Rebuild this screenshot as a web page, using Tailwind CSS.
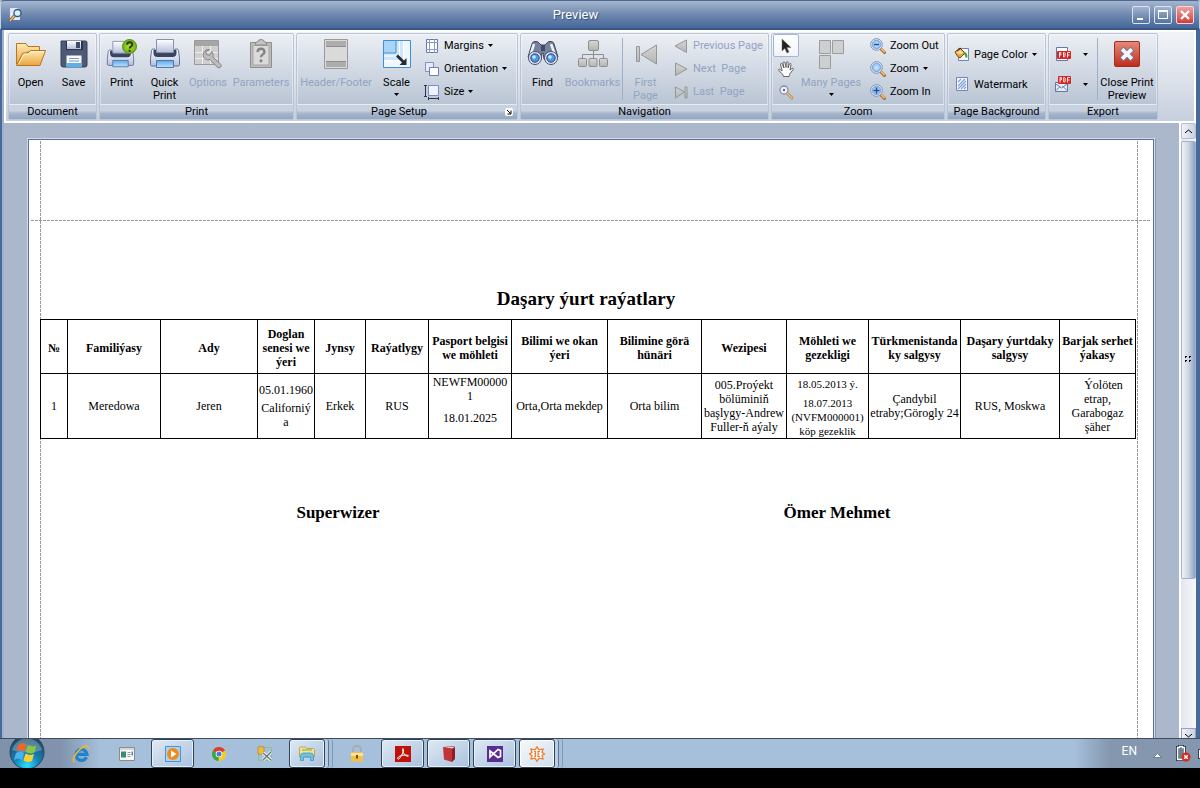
<!DOCTYPE html>
<html lang="tk">
<head>
<meta charset="utf-8">
<title>Preview</title>
<script src="https://cdn.jsdelivr.net/npm/@tailwindcss/browser@4"></script>
</head>
<body class="h-screen overflow-hidden bg-black flex flex-col font-[Roboto,sans-serif] text-[11px] leading-[13px] text-black">

<svg class="absolute w-0 h-0" aria-hidden="true">
  <defs>
    <linearGradient id="folder" x1="0" y1="0" x2="0" y2="1"><stop offset="0" stop-color="#fdeab5"/><stop offset="1" stop-color="#eaa43c"/></linearGradient>
    <linearGradient id="metal" x1="0" y1="0" x2="0" y2="1"><stop offset="0" stop-color="#ffffff"/><stop offset="1" stop-color="#b4bfdc"/></linearGradient>
    <linearGradient id="sky" x1="0" y1="0" x2="0" y2="1"><stop offset="0" stop-color="#5aa9ea"/><stop offset="1" stop-color="#bfe4fd"/></linearGradient>
    <linearGradient id="ash" x1="0" y1="0" x2="0" y2="1"><stop offset="0" stop-color="#d6d6d6"/><stop offset="1" stop-color="#b4b4b4"/></linearGradient>
    <linearGradient id="red" x1="0" y1="0" x2="0" y2="1"><stop offset="0" stop-color="#e88b79"/><stop offset="1" stop-color="#bf2a1b"/></linearGradient>
    <radialGradient id="green"><stop offset="0" stop-color="#b7e236"/><stop offset="1" stop-color="#6fae16"/></radialGradient>
    <radialGradient id="lens"><stop offset="0" stop-color="#d4eafd"/><stop offset="1" stop-color="#86b9ee"/></radialGradient>
    <radialGradient id="orb" cx=".5" cy=".9" r=".8"><stop offset="0" stop-color="#2fe0ff"/><stop offset=".45" stop-color="#1583b8"/><stop offset="1" stop-color="#234a66"/></radialGradient>
    <symbol id="printer" viewBox="0 0 32 32">
      <path d="M5 12h22l1 8H4z" fill="#3d4a66"/>
      <path d="M2.500 12.500q0-1.500 2-1.500H6v4q0 2 2 2h16q2 0 2-2v-4h1.500q2 0 2 1.500l1 8v6q0 1.500-1.500 1.500H3q-1.500 0-1.500-1.500v-6z" fill="url(#metal)" stroke="#62709a"/>
      <path d="M6 12v3q0 2.500 2.500 2.500h15Q26 17.500 26 15v-3" fill="none" stroke="#38445f" stroke-width="3"/>
      <path d="M7.500 1.500h17v13h-17z" fill="url(#metal)" stroke="#8792ac"/>
      <path d="M7.500 22.500h17v7h-17z" fill="url(#sky)" stroke="#5674a8"/>
    </symbol>
    <symbol id="magnifier" viewBox="0 0 16 16">
      <path d="M11 11l3.500 3.500" stroke="#b06a1f" stroke-width="3" stroke-linecap="round"/>
      <path d="M11.300 10.800l3 3" stroke="#f3c276" stroke-width="1.500" stroke-linecap="round"/>
      <circle cx="6.500" cy="6.500" r="5.800" fill="#f4f8fe" stroke="#7a8cba"/>
      <circle cx="6.500" cy="6.500" r="4.300" fill="url(#lens)" stroke="#6f93d0" stroke-width=".8"/>
    </symbol>
    <symbol id="caret" viewBox="0 0 5 3"><path d="M0 0h5L2.500 3z"/></symbol>
  </defs>
</svg>

<main class="flex-1 min-h-0 flex flex-col overflow-hidden bg-[#abb8cb]">
  <header class="h-[30px] shrink-0 flex items-center pl-2 pr-[5px] gap-[2px] rounded-t-[4px] border border-b-2 border-[#c3d0e2] border-t-[#4a6890] border-b-[#3a5884] bg-linear-to-b from-[#a5b6d0] via-[#7089af] to-[#45679a]">
    <svg class="w-[14px] h-4 shrink-0" viewBox="0 0 14 16"><path d="M1 1h8l2 2v10H1z" fill="#dfe9fa"/><path d="M6 8l-5 6" stroke="#8a5a2a" stroke-width="3"/><path d="M6 8l-5 6" stroke="#f4c88c" stroke-width="1.200"/><circle cx="8.500" cy="6" r="3.500" fill="#d7f2f8" stroke="#34567d" stroke-width="1.300"/></svg>
    <h1 class="flex-1 text-center text-[13px] leading-4 pr-1 text-white [text-shadow:1px_1px_1px_#334f78]">Preview</h1>
    <div class="flex gap-1">
      <button aria-label="Minimize" class="w-[18px] h-[18px] rounded-[2px] border border-[#dbe4f0] bg-linear-to-b from-[#a2b4d0] to-[#5573a2] flex items-end justify-start pl-1 pb-[3px]"><span class="w-[6px] h-[2px] bg-white"></span></button>
      <button aria-label="Maximize" class="w-[18px] h-[18px] rounded-[2px] border border-[#dbe4f0] bg-linear-to-b from-[#a2b4d0] to-[#5573a2] flex items-center justify-center"><span class="w-[10px] h-[9px] border border-t-2 border-white"></span></button>
      <button aria-label="Close" class="w-[18px] h-[18px] rounded-[2px] border border-[#f4d8d8] bg-linear-to-b from-[#eca0a0] to-[#d03a3a] flex items-center justify-center"><svg class="w-[10px] h-[10px]" viewBox="0 0 10 10"><path d="M1 1l8 8M9 1L1 9" stroke="#fff" stroke-width="2.400"/></svg></button>
    </div>
  </header>

  <div class="flex-1 min-h-0 flex flex-col border-l-2 border-r-4 border-l-[#4a6a9c] border-r-[#49699a] pl-[2px] shadow-[inset_2px_0_0_#9db0cc]">
    <nav aria-label="Ribbon" class="h-[93px] shrink-0 flex gap-[2px] pl-[2px] pt-[1px] border-2 border-white bg-linear-to-b from-[#f1f3f7] via-[#dfe4ec] to-[#c6cfde] overflow-hidden">

      <section class="w-[89px] shrink-0 h-[87px] flex flex-col border border-[#b9c5d7] rounded-[2px] bg-linear-to-b from-[#eceff4] to-[#afbccd] shadow-[inset_0_0_0_1px_#ffffff66]">
        <div class="h-[70px] flex">
          <button class="w-[43px] pt-1 flex flex-col items-center gap-[6px]">
            <svg class="w-8 h-8" viewBox="0 0 32 32"><path d="M1.500 26V5.500h9.500l2 3h11.500V14h-12l-7 12z" fill="url(#folder)" stroke="#b77722"/><path d="M1.500 27.500L8 15h5l2.500-2.500h15L25 27.500z" fill="url(#folder)" stroke="#b9731c"/><path d="M3.500 26.300L9 16.200h4.500l2.500-2.500h13" fill="none" stroke="#fff3cd"/></svg>
            <span>Open</span></button>
          <button class="w-[43px] pt-1 flex flex-col items-center gap-[6px]">
            <svg class="w-8 h-8" viewBox="0 0 32 32"><path d="M3 3h24.500q1.500 0 1.500 1.500V27q0 2-2 2H5q-2 0-2-2z" fill="#4e5a75" stroke="#37425c"/><path d="M8 3h17v9H8z" fill="#2b3450"/><path d="M9 3h14v8H9z" fill="url(#metal)"/><path d="M18 4h4v6h-4z" fill="#3f4a66"/><path d="M8.500 17.500h15v11h-15z" fill="#f7f9fd"/><path d="M8.500 25h15v4h-15z" fill="#5bb1ea"/><path d="M11 20.500h10M11 23h10" stroke="#8a97b4"/></svg>
            <span>Save</span></button>
        </div>
        <h2 class="flex-1 leading-[14px] text-center border-t border-[#e6ebf3] bg-linear-to-b from-[#c7d1e0] from-40% via-[#a7b5cc] via-60% to-[#94a6c2]">Document</h2>
      </section>

      <section class="w-[195px] shrink-0 h-[87px] flex flex-col border border-[#b9c5d7] rounded-[2px] bg-linear-to-b from-[#eceff4] to-[#afbccd] shadow-[inset_0_0_0_1px_#ffffff66]">
        <div class="h-[70px] flex">
          <button class="w-[43px] pt-1 flex flex-col items-center gap-[6px]">
            <svg class="w-8 h-8" viewBox="0 0 32 32"><svg x="0" y="2" width="29" height="29" viewBox="0 0 32 32"><use href="#printer"/></svg><circle cx="23.500" cy="8.500" r="7" fill="url(#green)" stroke="#5a8f14"/><path d="M21 6.700q.2-2.500 2.700-2.500T26.300 6.500q0 1.500-1.500 2.200-1.200.6-1.200 1.800" fill="none" stroke="#243b08" stroke-width="1.900"/><path d="M22.600 11.800h2v2h-2z" fill="#243b08"/></svg>
            <span>Print</span></button>
          <button class="w-[43px] pt-1 flex flex-col items-center gap-[6px]">
            <svg class="w-8 h-8"><use href="#printer"/></svg>
            <span>Quick<br>Print</span></button>
          <button disabled class="w-[44px] pt-1 flex flex-col items-center gap-[6px] text-[#91a4c3]">
            <svg class="w-8 h-8" viewBox="0 0 32 32"><path d="M2.500 2.500h24v24h-24z" fill="#cfcfcf" stroke="#999"/><path d="M3 3h23v5H3z" fill="#a5a5a5"/><path d="M3 14.500h23M3 20.500h23M10.500 8v18M18.500 8v18" stroke="#eee"/><path d="M17.500 11.500a5.500 5.500 0 0 0-6 7.500 5.500 5.500 0 0 0 6.500 2.500l7.500 7.800q1.600 1.300 3-.1t.1-3l-7.800-7.200a5.500 5.500 0 0 0-1-5.500l-2.300 3.800-3-.8-.6-3z" fill="#bdbdbd" stroke="#858585"/></svg>
            <span>Options</span></button>
          <button disabled class="w-[62px] pt-1 flex flex-col items-center gap-[6px] text-[#91a4c3]">
            <svg class="w-8 h-8" viewBox="0 0 32 32"><path d="M5.500 4.500h21v25h-21z" fill="#bcbcbc" stroke="#8e8e8e"/><path d="M8 7.500h16v19.500H8z" fill="#dadada" stroke="#a5a5a5"/><path d="M10.500 7V5q0-1 2-1 .5-2.500 3.500-2.500T19.500 4q2 0 2 1v2z" fill="#c4c4c4" stroke="#8b8b8b"/><path d="M12.500 14q.3-3.200 3.500-3.200t3.500 3q0 2-2 2.900-1.500.8-1.500 2.600" fill="none" stroke="#848484" stroke-width="2.400"/><circle cx="16" cy="22.800" r="1.600" fill="#848484"/></svg>
            <span>Parameters</span></button>
        </div>
        <h2 class="flex-1 leading-[14px] text-center border-t border-[#e6ebf3] bg-linear-to-b from-[#c7d1e0] from-40% via-[#a7b5cc] via-60% to-[#94a6c2]">Print</h2>
      </section>

      <section class="w-[222px] shrink-0 h-[87px] flex flex-col border border-[#b9c5d7] rounded-[2px] bg-linear-to-b from-[#eceff4] to-[#afbccd] shadow-[inset_0_0_0_1px_#ffffff66]">
        <div class="h-[70px] flex">
          <button disabled class="w-[78px] pt-1 flex flex-col items-center gap-[6px] text-[#91a4c3]">
            <svg class="w-8 h-8" viewBox="0 0 32 32"><path d="M4.500 1.500h23v29h-23z" fill="#dadada" stroke="#9a9a9a"/><path d="M6 3h20v5H6zM6 24h20v5H6z" fill="#adadad"/><path d="M6 8.500h20M6 23.500h20" stroke="#8f8f8f"/></svg>
            <span>Header/Footer</span></button>
          <button class="w-[43px] pt-1 flex flex-col items-center gap-[6px]">
            <svg class="w-8 h-8" viewBox="0 0 32 32"><path d="M2.500 2.500h27v27h-27z" fill="#eef7fe" stroke="#3f8fd4"/><path d="M3 3h19v19H3z" fill="#cde6fa"/><path d="M22.500 3v20H3M18.500 3v15H3" fill="none" stroke="#fff"/><path d="M3 3h12v12H3z" fill="#a8d4f8"/><path d="M15 3v12H3" fill="none" stroke="#3f8fd4"/><path d="M17 16.500l6 6 2.500-2.500v7h-7l2.500-2.500-6-6z" fill="#262b36"/></svg>
            <span class="flex flex-col items-center gap-1">Scale<svg class="w-[5px] h-[3px]"><use href="#caret"/></svg></span></button>
          <div class="flex flex-col pl-[6px] flex-1">
            <button class="h-[23px] flex items-center gap-1"><svg class="w-4 h-4" viewBox="0 0 16 16"><path d="M2.500 1.500h11v13h-11z" fill="#fff" stroke="#6676b0"/><path d="M5.500 1v14M10.500 1v14M2 4.500h12M2 11.500h12" stroke="#8b98c8"/></svg>Margins<svg class="w-[5px] h-[3px]"><use href="#caret"/></svg></button>
            <button class="h-[23px] flex items-center gap-1"><svg class="w-4 h-4" viewBox="0 0 16 16"><path d="M1.500 1.500h8v9h-8z" fill="#e7ecfa" stroke="#8290c4"/><path d="M5.500 6.500h9v8h-9z" fill="#fff" stroke="#6f7eb6"/></svg>Orientation<svg class="w-[5px] h-[3px]"><use href="#caret"/></svg></button>
            <button class="h-[23px] flex items-center gap-1"><svg class="w-4 h-4" viewBox="0 0 16 16"><path d="M4.500 1.500h10v10h-10z" fill="#eef2fd" stroke="#7d8bc0"/><path d="M1.500 1v11M0 1.500h3M0 12.500h3M4.500 14.500h10M4.500 13v3M14.500 13v3" stroke="#28355f"/></svg>Size<svg class="w-[5px] h-[3px]"><use href="#caret"/></svg></button>
          </div>
        </div>
        <div class="flex-1 flex items-start border-t border-[#e6ebf3] bg-linear-to-b from-[#c7d1e0] from-40% via-[#a7b5cc] via-60% to-[#94a6c2] px-1">
          <h2 class="flex-1 text-center leading-[14px] pr-2">Page Setup</h2>
          <button aria-label="Page Setup options" class="w-2 h-2 mt-[3px] rounded-[2px] bg-white"><svg class="w-2 h-2" viewBox="0 0 8 8"><path d="M2 2l3.500 3.500M6 2.500V6H2.500" fill="none" stroke="#000"/></svg></button>
        </div>
      </section>

      <section class="w-[249px] shrink-0 h-[87px] flex flex-col border border-[#b9c5d7] rounded-[2px] bg-linear-to-b from-[#eceff4] to-[#afbccd] shadow-[inset_0_0_0_1px_#ffffff66]">
        <div class="h-[70px] flex">
          <button class="w-[43px] pt-1 flex flex-col items-center gap-[6px]">
            <svg class="w-8 h-8" viewBox="0 0 32 32"><path d="M5 6q0-2 3-2.500t4 1.500l2 2h4l2-2q1-2 4-1.500t3 2.500l4 13-8 6-6-4-1-6h-1l-1 6-6 4-7-6z" fill="#77819e" stroke="#3c455f"/><path d="M7 6l-3.500 11M24 6l4 11" stroke="#eef1f8" stroke-width="2.500"/><path d="M14 7h4v6h-4z" fill="#414b66"/><circle cx="8" cy="20" r="6.500" fill="#e4e8f1" stroke="#454f6c"/><circle cx="24" cy="20" r="6.500" fill="#e4e8f1" stroke="#454f6c"/><circle cx="8" cy="20" r="4.200" fill="#4b9bea" stroke="#2c3c80"/><circle cx="24" cy="20" r="4.200" fill="#4b9bea" stroke="#2c3c80"/><circle cx="7" cy="19" r="1.800" fill="#c9e9ff"/><circle cx="23" cy="19" r="1.800" fill="#c9e9ff"/></svg>
            <span>Find</span></button>
          <button disabled class="w-[57px] pt-1 flex flex-col items-center gap-[6px] text-[#91a4c3]">
            <svg class="w-8 h-8" viewBox="0 0 32 32"><g fill="url(#ash)" stroke="#8e8e8e"><rect x="11.500" y="2.500" width="10" height="10" rx="1.500"/><rect x="1.500" y="20.500" width="8" height="8" rx="1"/><rect x="12" y="20.500" width="8" height="8" rx="1"/><rect x="22.500" y="20.500" width="8" height="8" rx="1"/></g><path d="M16.500 13v7M5.500 20v-3.500h21V20" fill="none" stroke="#8e8e8e"/></svg>
            <span>Bookmarks</span></button>
          <span class="w-px h-[62px] mt-1 mx-[1px] bg-[#9fb0cb]"></span>
          <button disabled class="w-[43px] pt-1 flex flex-col items-center gap-[6px] text-[#91a4c3]">
            <svg class="w-8 h-8" viewBox="0 0 32 32"><path d="M6.500 8.500h3v15h-3zM26.500 7v19L11 16.500z" fill="url(#ash)" stroke="#969696"/></svg>
            <span>First<br>Page</span></button>
          <div class="flex flex-col pl-[6px] flex-1 text-[#91a4c3] whitespace-nowrap">
            <button disabled class="h-[23px] flex items-center gap-1"><svg class="w-4 h-4 shrink-0" viewBox="0 0 16 16"><path d="M13.500 2v12.500L2 8z" fill="url(#ash)" stroke="#969696"/></svg>Previous Page</button>
            <button disabled class="h-[23px] flex items-center gap-1"><svg class="w-4 h-4 shrink-0" viewBox="0 0 16 16"><path d="M2.500 2v12.500L14 8z" fill="url(#ash)" stroke="#969696"/></svg>Next&nbsp; Page</button>
            <button disabled class="h-[23px] flex items-center gap-1"><svg class="w-4 h-4 shrink-0" viewBox="0 0 16 16"><path d="M2.500 3v11L11.500 8zM12 3h2v11h-2z" fill="url(#ash)" stroke="#969696"/></svg>Last&nbsp; Page</button>
          </div>
        </div>
        <h2 class="flex-1 leading-[14px] text-center border-t border-[#e6ebf3] bg-linear-to-b from-[#c7d1e0] from-40% via-[#a7b5cc] via-60% to-[#94a6c2]">Navigation</h2>
      </section>

      <section class="w-[174px] shrink-0 h-[87px] flex flex-col border border-[#b9c5d7] rounded-[2px] bg-linear-to-b from-[#eceff4] to-[#afbccd] shadow-[inset_0_0_0_1px_#ffffff66]">
        <div class="h-[70px] flex pl-[1px]">
          <div class="w-[26px] flex flex-col">
            <button aria-label="Pointer" class="h-[23px] flex items-center justify-center bg-linear-to-b from-white to-[#f1f4f9] border border-[#a3b5d2] rounded-[2px]"><svg class="w-4 h-4" viewBox="0 0 16 16"><path d="M4 1v12l2.800-2.600L9 15l2-1-2.200-4.400H13z" fill="#222" stroke="#777" stroke-width=".5"/></svg></button>
            <button aria-label="Hand Tool" class="h-[23px] flex items-center justify-center"><svg class="w-4 h-4" viewBox="0 0 16 16"><path d="M4 9L2.500 3.500q0-1 .8-1t1 .8L6 7 5 2q0-1 .9-1t1.100 1l1 4.500L8.300 1.500q.2-.9 1-.8t.8 1V7l1.300-4q.4-.8 1.100-.6t.5 1.300L12 9l2-1.500q1-.5 1.300.1t-.5 1.400L12 12.500q-.5 1-1 3H5.500Q5 13 3 11.500L.7 9.500Q.2 8.500 1 8.200t1.400.4L4 10z" fill="#fff" stroke="#444" stroke-width=".8"/></svg></button>
            <button aria-label="Magnifier" class="h-[23px] flex items-center justify-center"><svg class="w-4 h-4" viewBox="0 0 16 16"><path d="M9 9l5 5" stroke="#b5762d" stroke-width="2.600" stroke-linecap="round"/><path d="M9 9l5 5" stroke="#f6cd8b" stroke-width="1.200" stroke-linecap="round"/><circle cx="6" cy="6" r="4" fill="#e4f1fd" stroke="#8093b5" stroke-width="1.300"/><path d="M5 5h2v2H5z" fill="#e0321f"/></svg></button>
          </div>
          <button disabled class="w-[64px] pt-1 flex flex-col items-center gap-[6px] text-[#91a4c3] whitespace-nowrap">
            <svg class="w-8 h-8" viewBox="0 0 32 32"><path d="M4.500 2.500h11v13h-11zM17.500 2.500h11v13h-11zM4.500 17.500h11v13h-11z" fill="#cdcfd1" stroke="#9c9c9c"/></svg>
            <span class="flex flex-col items-center gap-1">Many Pages<svg class="w-[5px] h-[3px] text-black"><use href="#caret"/></svg></span></button>
          <div class="flex flex-col pl-[7px] flex-1 whitespace-nowrap">
            <button class="h-[23px] flex items-center gap-1"><svg class="w-4 h-4 shrink-0" viewBox="0 0 16 16"><use href="#magnifier"/><path d="M4 6.500h5" stroke="#234d92" stroke-width="1.500"/></svg>Zoom Out</button>
            <button class="h-[23px] flex items-center gap-1"><svg class="w-4 h-4 shrink-0"><use href="#magnifier"/></svg>Zoom<svg class="w-[5px] h-[3px]"><use href="#caret"/></svg></button>
            <button class="h-[23px] flex items-center gap-1"><svg class="w-4 h-4 shrink-0" viewBox="0 0 16 16"><use href="#magnifier"/><path d="M3.500 6.500h6M6.500 3.500v6" stroke="#234d92" stroke-width="1.500"/></svg>Zoom In</button>
          </div>
        </div>
        <h2 class="flex-1 leading-[14px] text-center border-t border-[#e6ebf3] bg-linear-to-b from-[#c7d1e0] from-40% via-[#a7b5cc] via-60% to-[#94a6c2]">Zoom</h2>
      </section>

      <section class="w-[99px] shrink-0 h-[87px] flex flex-col border border-[#b9c5d7] rounded-[2px] bg-linear-to-b from-[#eceff4] to-[#afbccd] shadow-[inset_0_0_0_1px_#ffffff66] whitespace-nowrap">
        <div class="h-[70px] flex flex-col pt-[5px] pl-[6px]">
          <button class="h-[30px] flex items-center gap-1"><svg class="w-4 h-4 shrink-0" viewBox="0 0 16 16"><path d="M4.500 2.500h10v12h-10z" fill="#f4f8ff" stroke="#7584b5"/><path d="M1 6l5-4 5 5-5 5q-2 0-5-6z" fill="#e9a63e" stroke="#7a4612"/><path d="M3 5l4-3" stroke="#2c1c0c"/><path d="M2 7l4-3 4 3-4 1z" fill="#fbdc9a"/><path d="M9.500 6.500q3 1 3 5" fill="none" stroke="#4da02e" stroke-width="2"/></svg>Page Color<svg class="w-[5px] h-[3px]"><use href="#caret"/></svg></button>
          <button class="h-[30px] flex items-center gap-1"><svg class="w-4 h-4 shrink-0" viewBox="0 0 16 16"><path d="M2.500 1.500h11v13h-11z" fill="#f3f8ff" stroke="#7584b5"/><path d="M4 6l3-3M4 10l7-7M4 13l8-8M7 13l5-5M10 13l2-2" stroke="#7fa0d8" stroke-width="1.200"/></svg>Watermark</button>
        </div>
        <h2 class="flex-1 leading-[14px] text-center border-t border-[#e6ebf3] bg-linear-to-b from-[#c7d1e0] from-40% via-[#a7b5cc] via-60% to-[#94a6c2]">Page Background</h2>
      </section>

      <section class="w-[110px] shrink-0 h-[87px] flex flex-col border border-[#b9c5d7] rounded-[2px] bg-linear-to-b from-[#eceff4] to-[#afbccd] shadow-[inset_0_0_0_1px_#ffffff66] whitespace-nowrap">
        <div class="h-[70px] flex">
          <div class="w-[47px] flex flex-col pt-[5px] pl-[6px]">
            <button aria-label="Export to PDF" class="h-[30px] flex items-center gap-3"><svg class="w-4 h-4 shrink-0" viewBox="0 0 16 16"><path d="M1.500 1.500h11v13h-11z" fill="#fafcff" stroke="#6676a8"/><rect x="2" y="5" width="14" height="8" rx="1" fill="#d8251f"/><path d="M4.500 11.500v-5h1.300v2.500H4.500M8.500 6.500v4.500h.8l.7-.8V7.300l-.7-.8zM12.500 11.500v-5h2.500M12.500 9h2" fill="none" stroke="#fff" stroke-width=".9"/></svg><svg class="w-[5px] h-[3px]"><use href="#caret"/></svg></button>
            <button aria-label="Send as PDF" class="h-[30px] flex items-center gap-3"><svg class="w-4 h-4 shrink-0" viewBox="0 0 16 16"><path d="M.5 6.500h12v9H.5z" fill="#e6eefa" stroke="#6676a8"/><path d="M1 14.500l4-4M12 14.500l-4-4M1 8l5.500 4L12 8" fill="none" stroke="#6676a8"/><rect x="3" y="0" width="13" height="8" rx="1" fill="#d8251f"/><path d="M5 6.500v-5h1.300V4H5M8.700 1.500V6h.8l.7-.8V2.300l-.7-.8zM12.500 6.500v-5H15M12.500 4h2" fill="none" stroke="#fff" stroke-width=".9"/></svg><svg class="w-[5px] h-[3px]"><use href="#caret"/></svg></button>
          </div>
          <span class="w-px h-[62px] mt-1 mx-[1px] bg-[#9fb0cb]"></span>
          <button class="flex-1 pt-1 pr-[2px] flex flex-col items-center gap-[6px]">
            <svg class="w-8 h-8" viewBox="0 0 32 32"><rect x="3.500" y="3.500" width="25" height="25" rx="1.500" fill="url(#red)" stroke="#a52d20"/><path d="M12.500 12.500l7 7M19.500 12.500l-7 7" stroke="#6e7a96" stroke-width="5.500" stroke-linecap="square"/><path d="M12.500 12.500l7 7M19.500 12.500l-7 7" stroke="#f3f6fc" stroke-width="3.800" stroke-linecap="square"/></svg>
            <span>Close Print<br>Preview</span></button>
        </div>
        <h2 class="flex-1 leading-[14px] text-center border-t border-[#e6ebf3] bg-linear-to-b from-[#c7d1e0] from-40% via-[#a7b5cc] via-60% to-[#94a6c2]">Export</h2>
      </section>
    </nav>

    <div class="flex-1 min-h-0 flex">
      <article class="relative flex-1 ml-6 mt-4 mr-[25px] border border-b-0 border-[#5a6f9a] bg-white shadow-[0_0_0_1px_#d3dbe7,2px_0_0_#8d9ab0] font-['Liberation_Serif',serif] text-[12px] leading-[14px]">
        <div class="absolute inset-x-[2px] top-[80px] h-px bg-[repeating-linear-gradient(to_right,#9a9a9a_0_3px,transparent_3px_4px)]"></div>
        <div class="absolute left-[11px] top-[1px] bottom-0 w-px bg-[repeating-linear-gradient(to_bottom,#9a9a9a_0_3px,transparent_3px_4px)]"></div>
        <div class="absolute right-[15px] top-[1px] bottom-0 w-px bg-[repeating-linear-gradient(to_bottom,#9a9a9a_0_3px,transparent_3px_4px)]"></div>
        <div class="relative pt-[148px] pl-[11px] pr-[17px]">
          <h2 class="text-center text-[19px] leading-[22px] font-bold pr-1 mb-[9px]">Daşary ýurt raýatlary</h2>
          <table class="w-full table-fixed border-collapse text-center whitespace-nowrap">
            <colgroup>
              <col class="w-[27px]"><col class="w-[93px]"><col class="w-[97px]"><col class="w-[57px]"><col class="w-[51px]"><col class="w-[63px]"><col class="w-[83px]"><col class="w-[96px]"><col class="w-[94px]"><col class="w-[85px]"><col class="w-[82px]"><col class="w-[92px]"><col class="w-[99px]"><col class="w-[76px]">
            </colgroup>
            <thead>
              <tr class="h-[54px] [&>th]:border [&>th]:border-black [&>th]:p-0 [&>th]:pt-[2px]">
                <th>№</th><th>Familiýasy</th><th>Ady</th><th>Doglan<br>senesi we<br>ýeri</th><th>Jynsy</th><th>Raýatlygy</th><th>Pasport belgisi<br>we möhleti</th><th>Bilimi we okan<br>ýeri</th><th>Bilimine görä<br>hünäri</th><th>Wezipesi</th><th>Möhleti we<br>gezekligi</th><th>Türkmenistanda<br>ky salgysy</th><th>Daşary ýurtdaky<br>salgysy</th><th>Barjak serhet<br>ýakasy</th>
              </tr>
            </thead>
            <tbody>
              <tr class="h-[65px] [&>td]:border [&>td]:border-black [&>td]:p-0">
                <td>1</td><td>Meredowa</td><td>Jeren</td>
                <td><p class="mb-1">05.01.1960</p><p>Californiý<br>a</p></td>
                <td>Erkek</td><td>RUS</td>
                <td><p class="mb-2">NEWFM00000<br>1</p><p class="mb-3">18.01.2025</p></td>
                <td>Orta,Orta mekdep</td><td>Orta bilim</td>
                <td>005.Proýekt<br>bölüminiň<br>başlygy-Andrew<br>Fuller-ň aýaly</td>
                <td class="text-[11px]"><p class="mb-[5px] mt-[2px]">18.05.2013 ý.</p><p>18.07.2013<br>(NVFM000001)<br>köp gezeklik</p></td>
                <td>Çandybil<br>etraby;Görogly 24</td><td>RUS, Moskwa</td>
                <td><span class="pl-3">Ýolöten</span><br>etrap,<br>Garabogaz<br>şäher</td>
              </tr>
            </tbody>
          </table>
          <div class="grid grid-cols-2 text-center text-[17px] leading-5 font-bold pt-16">
            <p class="pl-[48px]">Superwizer</p>
            <p class="pr-[50px]">Ömer Mehmet</p>
          </div>
        </div>
      </article>

      <div class="w-[17px] shrink-0 flex flex-col border-l-2 border-white bg-linear-to-r from-[#e3e6ec] to-[#f8f8fb]">
        <button aria-label="Scroll up" class="h-4 shrink-0 flex items-center justify-center border border-[#b3c0d4] rounded-[2px] bg-linear-to-r from-[#f0f2f6] to-[#c9d2e0]"><svg class="w-[7px] h-1" viewBox="0 0 7 4"><path d="M0 4l3.500-3L7 4" fill="none" stroke="#000"/></svg></button>
        <div class="flex-[437] mt-[2px] flex items-center justify-center border border-[#a0b1cb] rounded-[2px] bg-linear-to-r from-[#f2f4f8] via-[#ccd5e3] to-[#8ea3c4]">
          <svg class="w-[7px] h-[7px]" viewBox="0 0 7 7"><path d="M0 0h2v1H1v1H0zM4 0h2v1H5v1H4zM0 4h2v1H1v1H0zM4 4h2v1H5v1H4z"/></svg>
        </div>
        <div class="flex-[150]"></div>
        <button aria-label="Scroll down" class="h-[10px] shrink-0 flex items-end justify-center border border-b-0 border-[#8fa5c6] bg-linear-to-r from-[#f0f2f6] to-[#c9d2e0]"><svg class="w-[7px] h-1" viewBox="0 0 7 4"><path d="M0 0l3.500 3L7 0" fill="none" stroke="#000"/></svg></button>
      </div>
    </div>
  </div>
</main>

<footer class="relative h-[30px] shrink-0 flex items-stretch border-t border-[#3f4c5e] bg-[linear-gradient(to_right,#7f92ab_0,#8193ac_60px,#a6bfdb_100px,#a6bfdb_calc(100%-125px),#8497ae_calc(100%-90px),#8497ae_100%)]">
  <button aria-label="Start" class="w-[58px] pl-[9px] flex items-center overflow-hidden"><svg class="w-9 h-[30px]" viewBox="0 0 36 30"><circle cx="18" cy="13" r="17" fill="url(#orb)" stroke="#24485f"/><path d="M3 11a15.500 15.500 0 0 1 30 0q-14 5-30 0z" fill="#fff" opacity=".25"/><path d="M9.500 5.500q4-3 8 0l-2 7q-4-2.500-8 0z" fill="#f0652a"/><path d="M18.800 6q4 2.500 8.500.5l-2 7q-4.500 2-8.500-.5z" fill="#8cc63f"/><path d="M7 14q4-2.500 8 0l-2 7q-4-3-8 0z" fill="#4bb2ee"/><path d="M16.500 14.500q4 2.500 8.500.5l-2 7q-4.500 2-8.500-.5z" fill="#fcd02f"/></svg></button>
  <button aria-label="Internet Explorer" class="w-[46px] flex items-center justify-center"><svg class="w-[18px] h-[18px]" viewBox="0 0 18 18"><path d="M14.500 12.300A5.500 5.500 0 1 1 15 9.300H5" fill="none" stroke="#1f83cb" stroke-width="3.200"/><path d="M2.500 16.800Q-.5 16 3.500 9.500 8.500 2.500 13.500 1.200q3.500-.7 2.500 2.800" fill="none" stroke="#f2bb26" stroke-width="1.500"/></svg></button>
  <button aria-label="Control window" class="w-[46px] flex items-center justify-center"><svg class="w-4 h-[14px]" viewBox="0 0 16 14"><path d="M.5.500h15v13H.5z" fill="#f7f7f5" stroke="#8b8b8b"/><path d="M1 1h14v2H1z" fill="#d8d8d8"/><path d="M2 4.500h5v6H2z" fill="#3a8a74"/><path d="M8.500 5.500h3M8.500 7.500h3M8.500 9.500h3" stroke="#999"/><path d="M12.500 4.500H14v4h-1.500z" fill="#4a86c8"/></svg></button>
  <div class="w-[46px] px-[1px] pr-[2px] flex"><button aria-label="Media Player" class="flex-1 flex items-center justify-center rounded-[3px] border border-[#2f4259] bg-linear-to-br from-[#dfe9f4] to-[#a9c1de] shadow-[inset_0_0_0_1px_#e8f0f8]"><svg class="w-4 h-4" viewBox="0 0 16 16"><path d="M.5.500h15v15H.5z" fill="#a9d3f3" stroke="#4d93cf"/><circle cx="8" cy="8" r="6" fill="#f18a1c"/><path d="M6 4.500L11.500 8 6 11.500z" fill="#fff"/></svg></button></div>
  <button aria-label="Chrome" class="w-[46px] flex items-center justify-center"><svg class="w-[14px] h-[14px]" viewBox="0 0 14 14"><circle cx="7" cy="7" r="7" fill="#f7cd1d"/><path d="M7 7L.9 3.500A7 7 0 0 1 13.100 3.500z" fill="#df3b2e"/><path d="M7 7L.9 3.500A7 7 0 0 0 6.500 14z" fill="#3aa34b"/><circle cx="7" cy="7" r="3.300" fill="#fff"/><circle cx="7" cy="7" r="2.500" fill="#3f7fd6"/></svg></button>
  <button aria-label="Database Tools" class="w-[46px] flex items-center justify-center"><svg class="w-4 h-4" viewBox="0 0 16 16"><path d="M1.500 1.500h13v13h-13z" fill="none" stroke="#6cc644" stroke-dasharray="1 1"/><path d="M1 1q3-1 6 0v7q-3 1-6 0z" fill="#eebc3a" stroke="#a77a1c" stroke-width=".6"/><path d="M6 7l8 7M14 6l-8 8" stroke="#fff" stroke-width="3"/><path d="M6 7l8 7M14 6l-8 8" stroke="#6a7480" stroke-width="1.500"/></svg></button>
  <div class="w-[46px] pl-[1px] flex pr-[1px]"><button aria-label="Explorer" class="w-9 flex items-center justify-center rounded-[3px] border border-[#2f4259] bg-linear-to-br from-[#dfe9f4] to-[#a9c1de] shadow-[inset_0_0_0_1px_#e8f0f8]"><svg class="w-4 h-[15px]" viewBox="0 0 16 15"><path d="M.5 11V2q0-1 1-1h5l1 1.500h7q1 0 1 1V11z" fill="#f6e19a" stroke="#c5a34b"/><path d="M3 4h10" stroke="#69b54a"/><path d="M1.500 14.500V10q0-3 3-3h7q3 0 3 3v4.500h-3V11h-7v3.500z" fill="#6cc3e6" stroke="#3a8fb8" stroke-width=".7"/></svg></button><span class="w-1 border-r border-[#5e7590] rounded-r-[3px] bg-[#b9cde3]"></span><span class="w-1 border-r border-[#8199b5] rounded-r-[3px]"></span></div>
  <button aria-label="Lock" class="w-[46px] flex items-center justify-center"><svg class="w-[14px] h-[17px]" viewBox="0 0 14 17"><path d="M3 8V5q0-4 4-4t4 4v3" fill="none" stroke="#a9adb2" stroke-width="1.800"/><rect x="1" y="7" width="12" height="9.500" rx="1" fill="#f4bf45"/><path d="M1 8h12v3H1z" fill="#fbe3a4"/><path d="M6 10h2v3.500H6z" fill="#6b4c12"/></svg></button>
  <div class="w-[46px] px-[1px] pr-[2px] flex"><button aria-label="Adobe Reader" class="flex-1 flex items-center justify-center rounded-[3px] border border-[#2f4259] bg-linear-to-br from-[#dfe9f4] to-[#a9c1de] shadow-[inset_0_0_0_1px_#e8f0f8]"><svg class="w-4 h-4" viewBox="0 0 16 16"><path d="M0 0h16v16H0z" fill="#c01208"/><path d="M3 13q-1.500-.5 1-2.500 2-1.200 6-1.500 4 0 3.500 1t-3-.5Q7.500 7 7.500 3.500q.3-2 1 0Q9 6 4.500 12.500 3.500 13.500 3 13z" fill="none" stroke="#fff"/></svg></button></div>
  <div class="w-[46px] px-[1px] pr-[2px] flex"><button aria-label="Book" class="flex-1 flex items-center justify-center rounded-[3px] border border-[#2f4259] bg-linear-to-br from-[#dfe9f4] to-[#a9c1de] shadow-[inset_0_0_0_1px_#e8f0f8]"><svg class="w-3 h-4" viewBox="0 0 12 16"><path d="M1 1l9-1 2 1v12l-3 3z" fill="#8e1e22"/><path d="M0 1l9 1.500V16L1 13.500z" fill="#c0343a"/><path d="M1 1l9-.5 1.500 1L9 2.500z" fill="#e9d9d4"/></svg></button></div>
  <div class="w-[46px] px-[1px] pr-[2px] flex"><button aria-label="Visual Studio" class="flex-1 flex items-center justify-center rounded-[3px] border border-[#2f4259] bg-linear-to-br from-[#dfe9f4] to-[#a9c1de] shadow-[inset_0_0_0_1px_#e8f0f8]"><svg class="w-4 h-4" viewBox="0 0 16 16"><path d="M0 0h16v16H0z" fill="#5c2d91"/><path d="M3 5l8 6.500 2.500-1v-6L11 3.500 3 11V5z" fill="none" stroke="#fff" stroke-width="1.700"/></svg></button></div>
  <div class="w-[46px] pl-[1px] flex pr-[1px]"><button aria-label="Services" class="w-9 flex items-center justify-center rounded-[3px] border border-[#2f4259] bg-linear-to-br from-[#f6f9fc] to-[#cfdded] shadow-[inset_0_0_0_1px_#ffffff]"><svg class="w-4 h-4" viewBox="0 0 16 16"><path d="M8 .8l2 3 4-.8-1 3.500L15.500 8 13 9.500l1 3.500-4-.8-2 3-2-3-4 .8 1-3.500L.5 8 3 6.500 2 3l4 .8z" fill="#fff" stroke="#ef7d2b" stroke-width="1.300"/><path d="M5 5.500h1.500v5H5M5 8h1.500M11 5.500H9v5h2M9 8h1.500" fill="none" stroke="#ef7d2b" stroke-width="1.200"/></svg></button><span class="w-1 border-r border-[#5e7590] rounded-r-[3px] bg-[#b9cde3]"></span><span class="w-1 border-r border-[#8199b5] rounded-r-[3px]"></span></div>
  <div class="ml-auto flex items-center">
    <span class="text-white text-[12px] pb-[5px] mr-4">EN</span>
    <button aria-label="Show hidden icons" class="mr-3 pt-1"><svg class="w-[9px] h-[5px]" viewBox="0 0 9 5"><path d="M.5 4.500h8L4.500.5z" fill="#fff" stroke="#50627b" stroke-width=".7"/></svg></button>
    <svg class="w-[17px] h-[17px] mr-[7px]" viewBox="0 0 17 17"><path d="M3.500 2.500h2v-1h3v1h2v12h-7z" fill="#5e6e84" stroke="#222b38" stroke-width="3"/><path d="M3.500 2.500h2v-1h3v1h2v12h-7z" fill="#6f7f95" stroke="#fff" stroke-width="1.300"/><circle cx="12" cy="12" r="4.500" fill="#d9281e"/><path d="M10.200 10.200l3.600 3.600M13.800 10.200l-3.600 3.600" stroke="#fff" stroke-width="1.500"/></svg>
    <span class="w-[2px] h-[10px] border border-r-0 border-[#33404f] bg-white"></span>
  </div>
</footer>
<div class="relative h-5 shrink-0 bg-black"></div>
</body>
</html>
